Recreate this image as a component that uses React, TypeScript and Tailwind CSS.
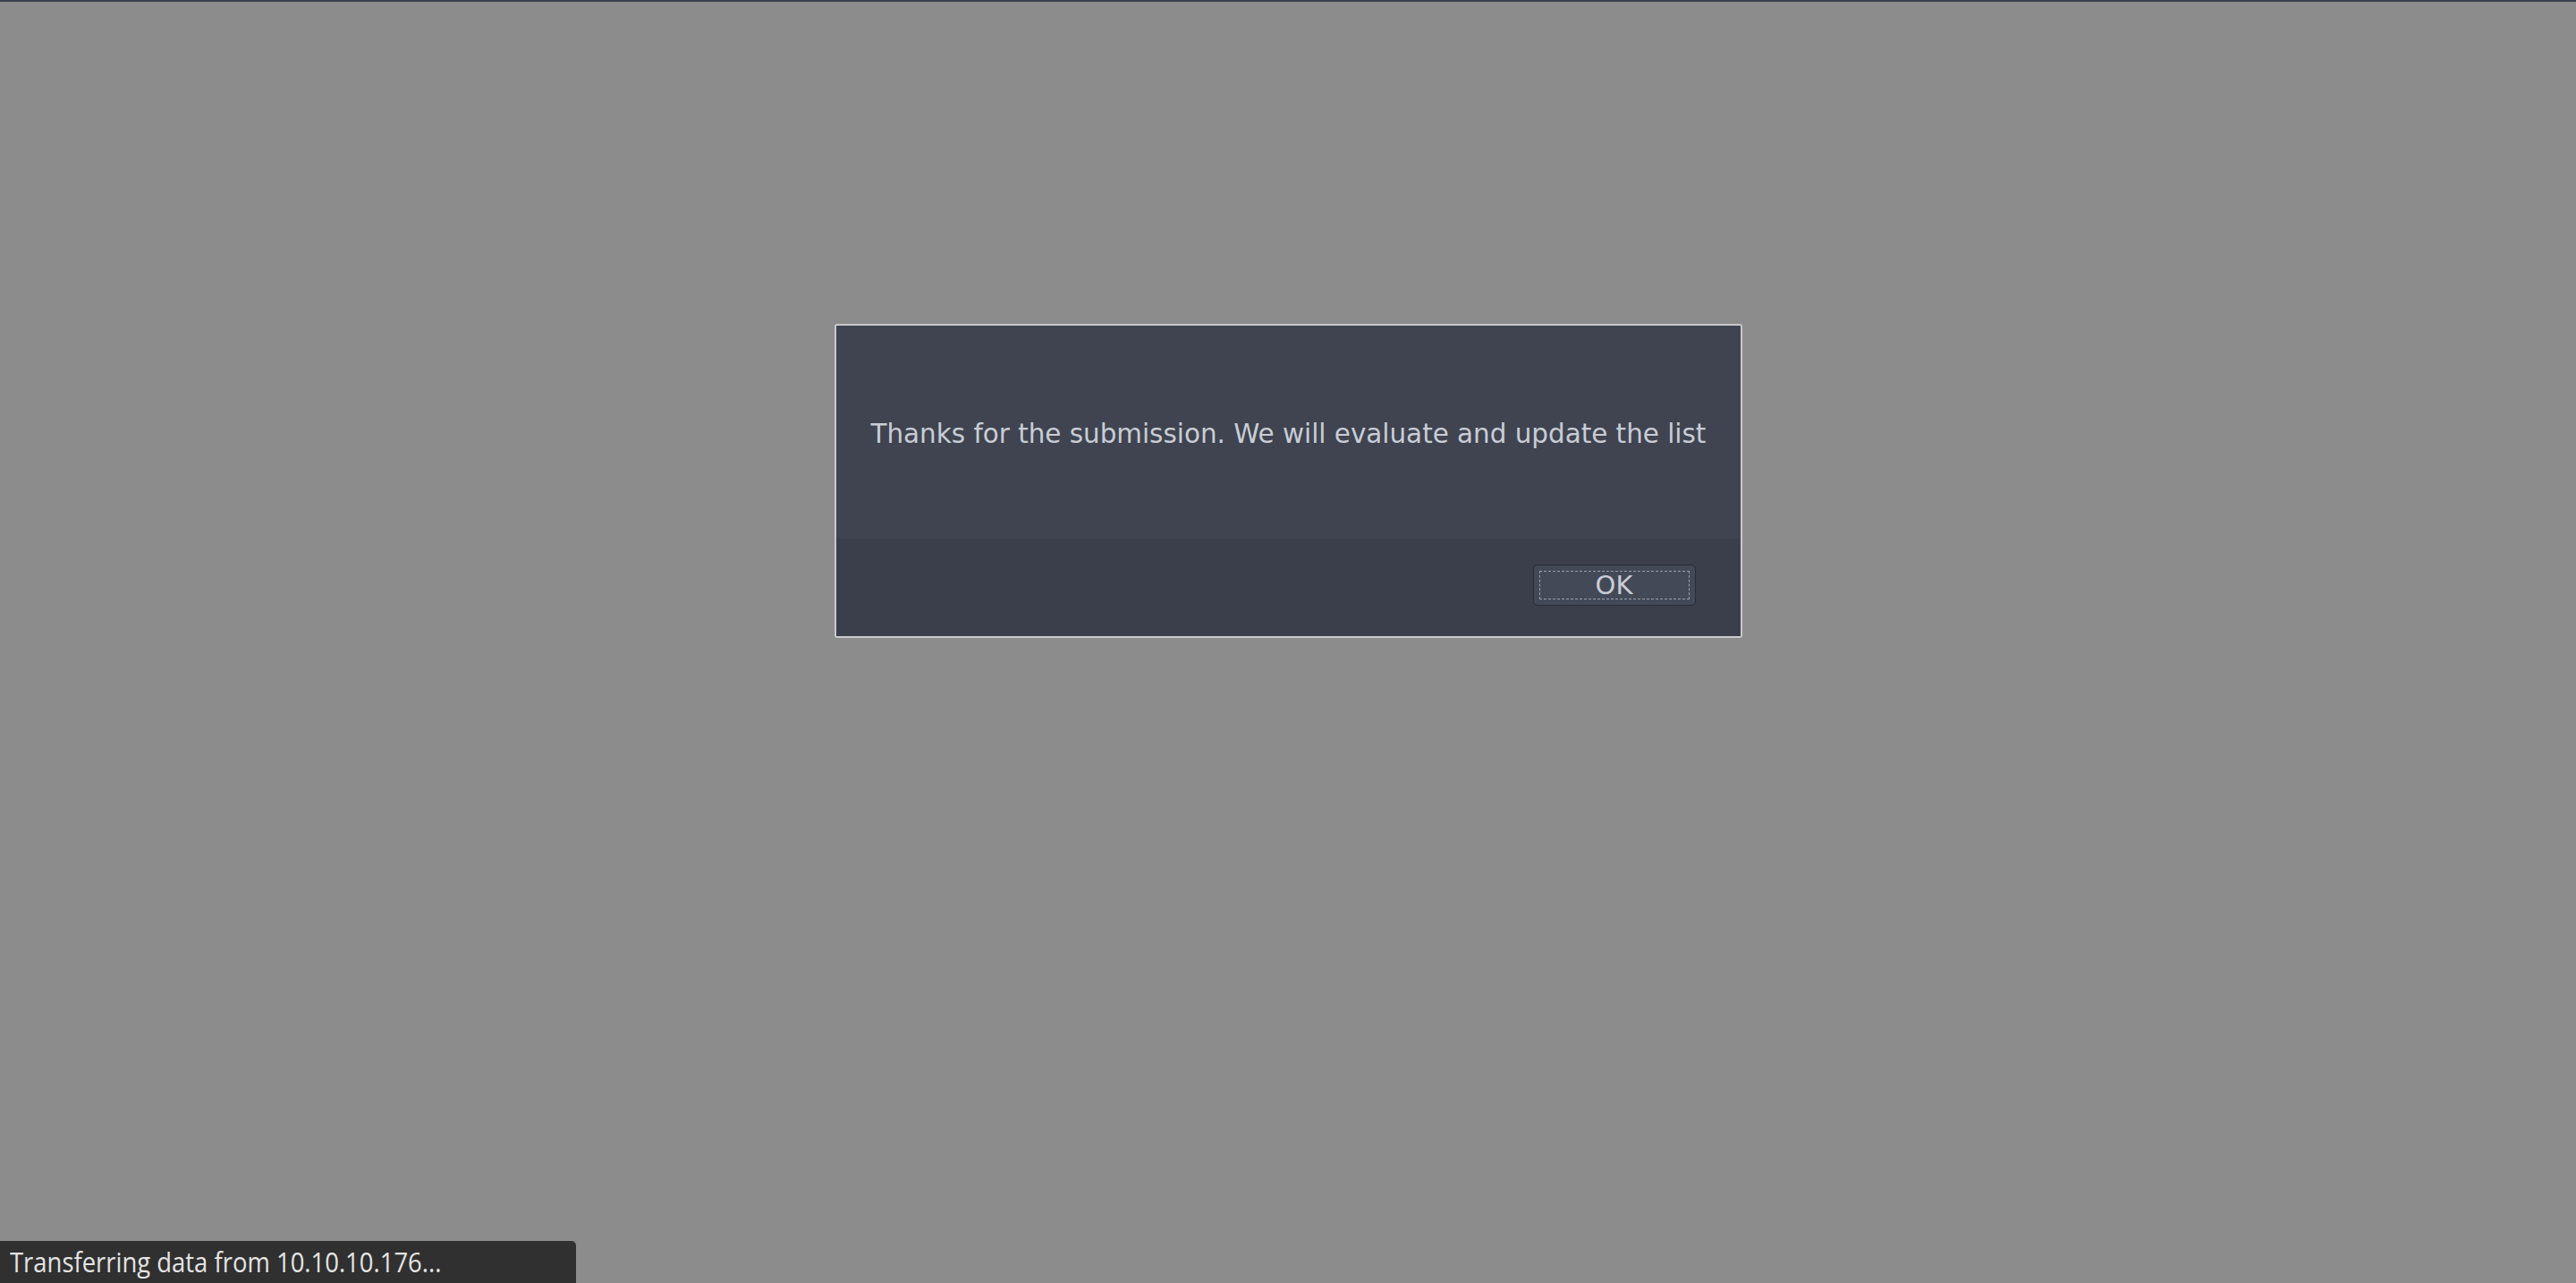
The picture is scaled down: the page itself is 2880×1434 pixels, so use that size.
export default function App() {
  return (
    <div className="relative h-screen w-full overflow-hidden bg-[#8c8c8c]">
      {/* top edge strip */}
      <div className="h-[2px] w-full bg-[#3b3f4b]" />

      {/* dialog */}
      <div className="flex justify-center pt-[360px]">
        <div className="w-[1015px] overflow-hidden rounded-[3px] border-2 border-[#c9c9cb] bg-[#3f4450]">
          <div
            className="flex h-[238px] items-center whitespace-nowrap pl-[39px] pr-[20px] pt-[4px] text-[29.4px] text-[#c9cdd6]"
            style={{ fontFamily: '"DejaVu Sans", sans-serif' }}
          >
            Thanks for the submission. We will evaluate and update the list
          </div>
          <div className="flex h-[109px] items-start justify-end bg-[#3b3f4b] pr-[50px] pt-[29px]">
            <button className="h-[46px] w-[182px] rounded-[5px] border border-[#2a2d36] bg-[#434957] p-[6px]">
              <div
                className="flex h-full w-full items-center justify-center border border-dashed border-[#9aa0aa] text-[29px] leading-none text-[#c9cdd6]"
                style={{ fontFamily: '"DejaVu Sans", sans-serif' }}
              >
                OK
              </div>
            </button>
          </div>
        </div>
      </div>

      {/* status bar */}
      <div
        className="absolute bottom-0 left-0 flex h-[47px] w-[644px] items-center rounded-tr-[5px] bg-[#303030] pl-[11px] text-[31px] text-[#e4e4e4]"
        style={{ fontFamily: '"Open Sans", sans-serif' }}
      >
        <span className="inline-block origin-left scale-x-[0.885] whitespace-nowrap">
          Transferring data from 10.10.10.176...
        </span>
      </div>
    </div>
  );
}
